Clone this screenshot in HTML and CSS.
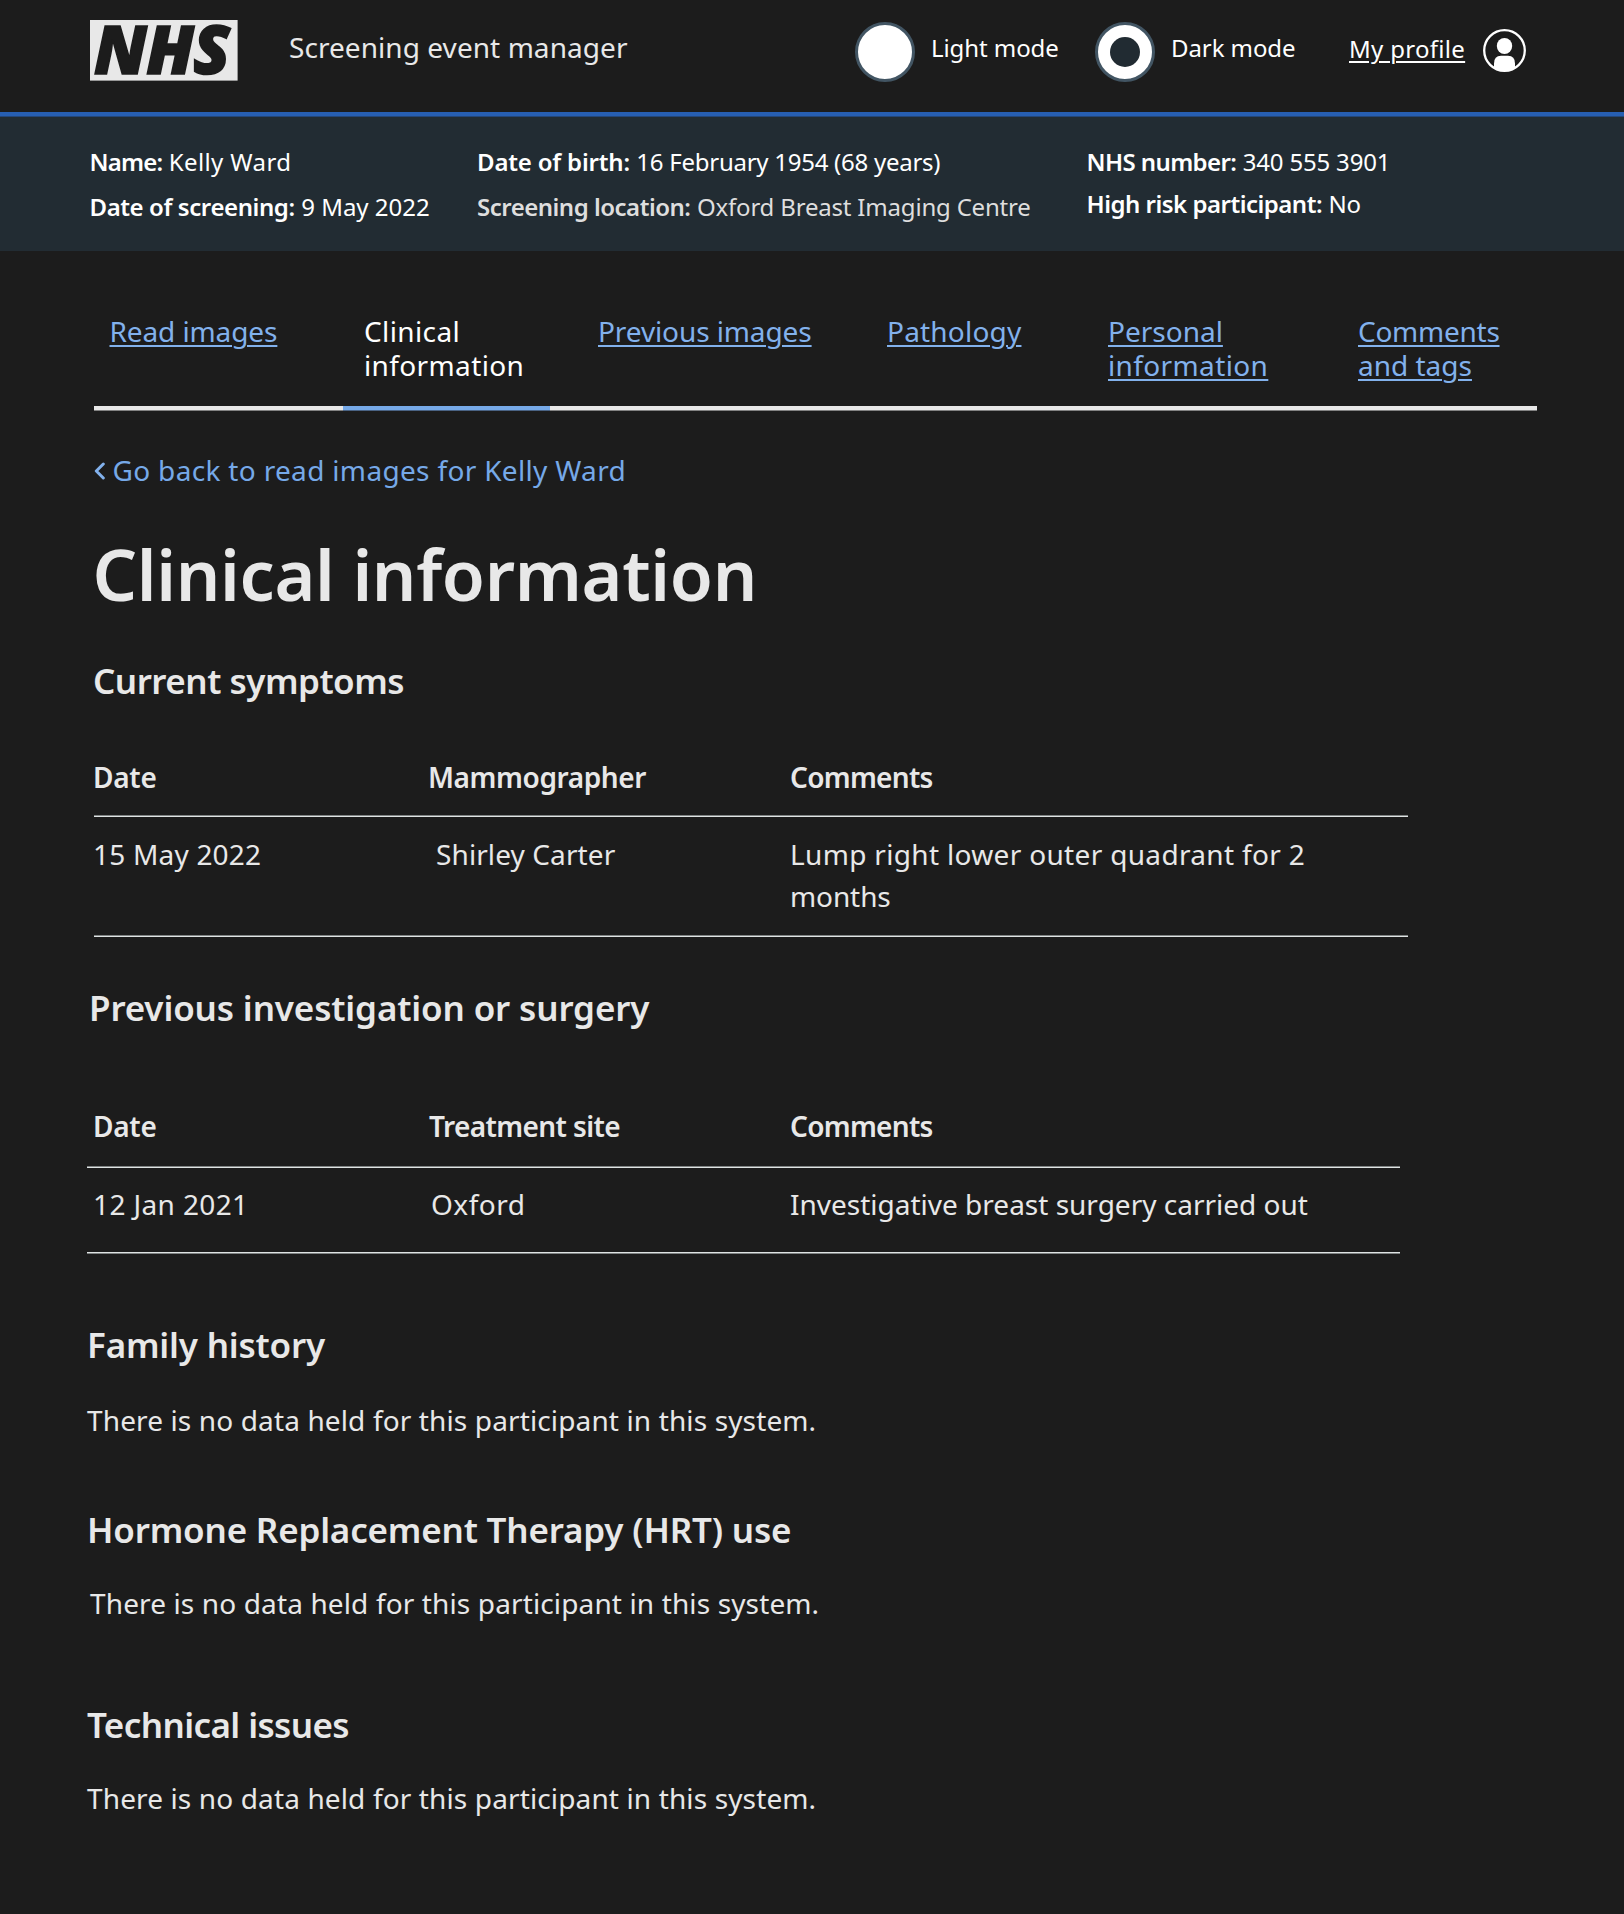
FILE: index.html
```html
<!DOCTYPE html>
<html lang="en">
<head>
<meta charset="utf-8">
<title>Clinical information - Screening event manager</title>
<link rel="stylesheet" href="styles.css">
</head>
<body>
<header class="header">
  <svg class="logo" width="148" height="61" viewBox="0 0 148 61" role="img" aria-label="NHS">
    <rect width="147.6" height="60.6" fill="#e8e8e8"/>
    <text class="logo-text" x="4" y="54" textLength="136" lengthAdjust="spacing">NHS</text>
  </svg>
  <div class="service">Screening event manager</div>
  <label class="mode"><span class="radio"></span><span class="mode-text">Light mode</span></label>
  <label class="mode"><span class="radio radio-on"></span><span class="mode-text">Dark mode</span></label>
  <div class="profile">
    <a class="profile-link" href="#">My profile</a>
    <svg class="avatar" width="43" height="43" viewBox="0 0 43 43">
      <defs><clipPath id="ring"><circle cx="21.5" cy="21.5" r="20.5"/></clipPath></defs>
      <circle cx="21.5" cy="21.5" r="20.3" fill="none" stroke="#fff" stroke-width="2.3"/>
      <ellipse cx="21.5" cy="17" rx="7.7" ry="8"/>
      <path clip-path="url(#ring)" d="M11 43V34.5Q11 26.7 18 26.7H25Q32 26.7 32 34.5V43Z"/>
    </svg>
  </div>
</header>

<section class="participant">
  <div class="facts">
    <div class="fact"><b class="t8">Name:</b><span class="w4">Kelly Ward</span></div>
    <div class="fact"><b class="t4">Date of screening:</b><span>9 May 2022</span></div>
  </div>
  <div class="facts">
    <div class="fact"><b class="t2">Date of birth:</b><span class="t3">16 February 1954 (68 years)</span></div>
    <div class="fact muted"><b class="t5">Screening location:</b><span class="t2">Oxford Breast Imaging Centre</span></div>
  </div>
  <div class="facts facts-tight">
    <div class="fact"><b class="t6">NHS number:</b><span class="t2">340 555 3901</span></div>
    <div class="fact"><b class="t5">High risk participant:</b><span class="t2">No</span></div>
  </div>
</section>

<nav class="tabs">
  <div class="tab tab-first"><a class="t1" href="#">Read images</a></div>
  <div class="tab tab-active"><span class="w4">Clinical<br>information</span></div>
  <div class="tab tab-third"><a class="t1" href="#">Previous images</a></div>
  <div class="tab"><a class="w2" href="#">Pathology</a></div>
  <div class="tab"><a href="#">Personal</a><br><a class="w4" href="#">information</a></div>
  <div class="tab"><a class="t3" href="#">Comments</a><br><a href="#">and tags</a></div>
</nav>

<main class="main">
  <a class="back" href="#">
    <svg class="chevron" width="12" height="18" viewBox="0 0 12 18"><path d="M9.3 2 2.3 9l7 7" fill="none" stroke="#82b1ec" stroke-width="3" stroke-linecap="round" stroke-linejoin="round"/></svg>
    <span class="w3">Go back to read images for Kelly Ward</span>
  </a>
  <h1 class="title">Clinical information</h1>

  <h2 class="heading heading-symptoms t5">Current symptoms</h2>
  <table class="records symptoms">
    <colgroup><col class="col-date"><col class="col-who"><col></colgroup>
    <thead><tr><th class="out1 t3">Date</th><th class="t4">Mammographer</th><th class="t7">Comments</th></tr></thead>
    <tbody><tr><td class="out1 w2">15 May 2022</td><td class="in8 w1">Shirley Carter</td><td class="comment w3">Lump right lower outer quadrant for 2 <span class="t1">months</span></td></tr></tbody>
  </table>

  <h2 class="heading heading-surgery t15">Previous investigation or surgery</h2>
  <table class="records surgery">
    <colgroup><col class="col-date"><col class="col-who"><col></colgroup>
    <thead><tr><th class="in6 t3">Date</th><th class="in1 t6">Treatment site</th><th class="t7">Comments</th></tr></thead>
    <tbody><tr><td class="in6 w4">12 Jan 2021</td><td class="in3 w5">Oxford</td><td>Investigative breast surgery carried out</td></tr></tbody>
  </table>

  <h2 class="heading heading-family t2">Family history</h2>
  <p class="note note-family">There is no data held for this participant in this system.</p>

  <h2 class="heading heading-hrt t2">Hormone Replacement Therapy (HRT) use</h2>
  <p class="note note-hrt">There is no data held for this participant in this system.</p>

  <h2 class="heading heading-technical t6">Technical issues</h2>
  <p class="note">There is no data held for this participant in this system.</p>
</main>
</body>
</html>
```
FILE: styles.css
```css
* { box-sizing: border-box; }
body {
  margin: 0;
  min-height: 1914px;
  background: #1c1c1c;
  color: #e8e8e8;
  font: 400 28px/34px "Noto Sans", "Open Sans", sans-serif;
}
h1, h2, p { margin: 0; }
b, th, h1, h2 { font-weight: 600; }

/* Tracking adjustments: t = tighter, w = wider */
.t1 { letter-spacing: -0.1px; }
.t15 { letter-spacing: -0.14px; }
.t2 { letter-spacing: -0.19px; }
.t3 { letter-spacing: -0.26px; }
.t4 { letter-spacing: -0.41px; }
.t5 { letter-spacing: -0.5px; }
.t6 { letter-spacing: -0.6px; }
.t7 { letter-spacing: -0.7px; }
.t8 { letter-spacing: -0.79px; }
.w1 { letter-spacing: 0.1px; }
.w2 { letter-spacing: 0.2px; }
.w3 { letter-spacing: 0.33px; }
.w4 { letter-spacing: 0.38px; }
.w5 { letter-spacing: 0.5px; }

/* Header */
.header {
  display: grid;
  grid-template-columns: 199px 566px 240px 254px auto;
  align-items: start;
  height: 116px;
  padding-left: 90px;
  border-bottom: 4px solid #275fb2;
}
.logo { display: block; margin-top: 20px; }
.logo-text {
  font: italic 900 67px "Noto Sans", "Open Sans", sans-serif;
  fill: #1c1c1c;
  stroke: #1c1c1c;
  stroke-width: 1.6px;
}
.service { margin-top: 30px; letter-spacing: 0.06px; }
.mode { display: flex; gap: 16px; margin-top: 22px; }
.mode-text, .profile-link {
  font-size: 24px;
  line-height: 30px;
  color: #fff;
}
.mode-text { margin-top: 11px; letter-spacing: -0.08px; }
.radio {
  display: grid;
  place-items: center;
  width: 60px;
  height: 60px;
  border: 3px solid #425563;
  border-radius: 50%;
  background: #fff;
}
.radio-on::after {
  content: "";
  width: 30px;
  height: 30px;
  border-radius: 50%;
  background: #212b32;
}
.profile { display: grid; grid-template-columns: 134px 43px; align-items: start; margin-top: 29px; }
.profile-link {
  margin-top: 5px;
  letter-spacing: 0.3px;
  text-decoration-thickness: 1.5px;
  text-underline-offset: 3px;
}
.avatar { display: block; fill: #fff; }

/* Participant summary */
.participant {
  display: grid;
  grid-template-columns: 387.5px 609.5px auto;
  height: 135px;
  padding: 31px 0 0 89.5px;
  background: #222c33;
  box-shadow: inset 0 1px #24477a;
  color: #fff;
  font-size: 24px;
  line-height: 30px;
}
.facts { display: flex; flex-direction: column; gap: 15px; }
.facts-tight { gap: 12px; }
.fact { display: flex; gap: 6.5px; white-space: nowrap; }
.muted { color: #dedede; }

/* Tabs */
.tabs {
  display: grid;
  grid-template-columns: 249px 207px 337px 221px 250px 179px;
  width: 1443px;
  margin: 63px 0 0 94px;
}
.tab {
  height: 96px;
  border-bottom: 4px solid #e8e8e8;
  box-shadow: 0 1px #828282;
}
.tab a {
  color: #82b1ec;
  text-decoration-thickness: 1.5px;
  text-underline-offset: 3px;
}
.tab-first { padding-left: 15.5px; }
.tab-active {
  padding-left: 21px;
  border-color: #76a9e8;
  box-shadow: 0 1px #4a6384;
  color: #fff;
}
.tab-third { padding-left: 48px; }

/* Content */
.main { padding: 43px 0 0 94px; }
.back {
  display: flex;
  align-items: center;
  gap: 6.5px;
  color: #76a9e8;
  text-decoration: none;
}
.chevron { margin-top: 2px; }
.title {
  margin: 47px 0 44px -1.5px;
  font-size: 70px;
  line-height: 80px;
  letter-spacing: -0.33px;
}
.heading { font-size: 35px; line-height: 44px; }
.heading-symptoms { margin: 45px 0 57px -1px; }
.heading-surgery { margin: 49px 0 79px -5px; }
.heading-family { margin: 70px 0 36px -7px; }
.heading-hrt { margin: 71px 0 34px -7px; }
.heading-technical { margin: 83px 0 34px -7px; }

.records {
  border-spacing: 0;
  table-layout: fixed;
}
.records th, .records td {
  padding: 0;
  border-bottom: 1px solid #dfe3e3;
  box-shadow: inset 0 -1px #7e8282;
  text-align: left;
  vertical-align: top;
}
.records th { height: 57px; }
.col-who { width: 362px; }
.symptoms { width: 1314px; }
.symptoms .col-date { width: 334px; }
.symptoms td { height: 120px; padding-top: 16px; line-height: 42px; }
.symptoms .comment { padding-right: 60px; }
.surgery { width: 1313px; margin-left: -7px; }
.surgery .col-date { width: 341px; }
.surgery th { height: 59px; }
.surgery td { height: 85px; padding-top: 19px; box-shadow: 0 1px #7e8282; }
.out1 { text-indent: -1px; }
.in1 { text-indent: 1px; }
.in3 { text-indent: 3px; }
.in6 { text-indent: 6px; }
.in8 { text-indent: 8px; }

.note { margin-left: -7px; letter-spacing: 0.13px; }
.note-hrt { margin-left: -4px; }
```
